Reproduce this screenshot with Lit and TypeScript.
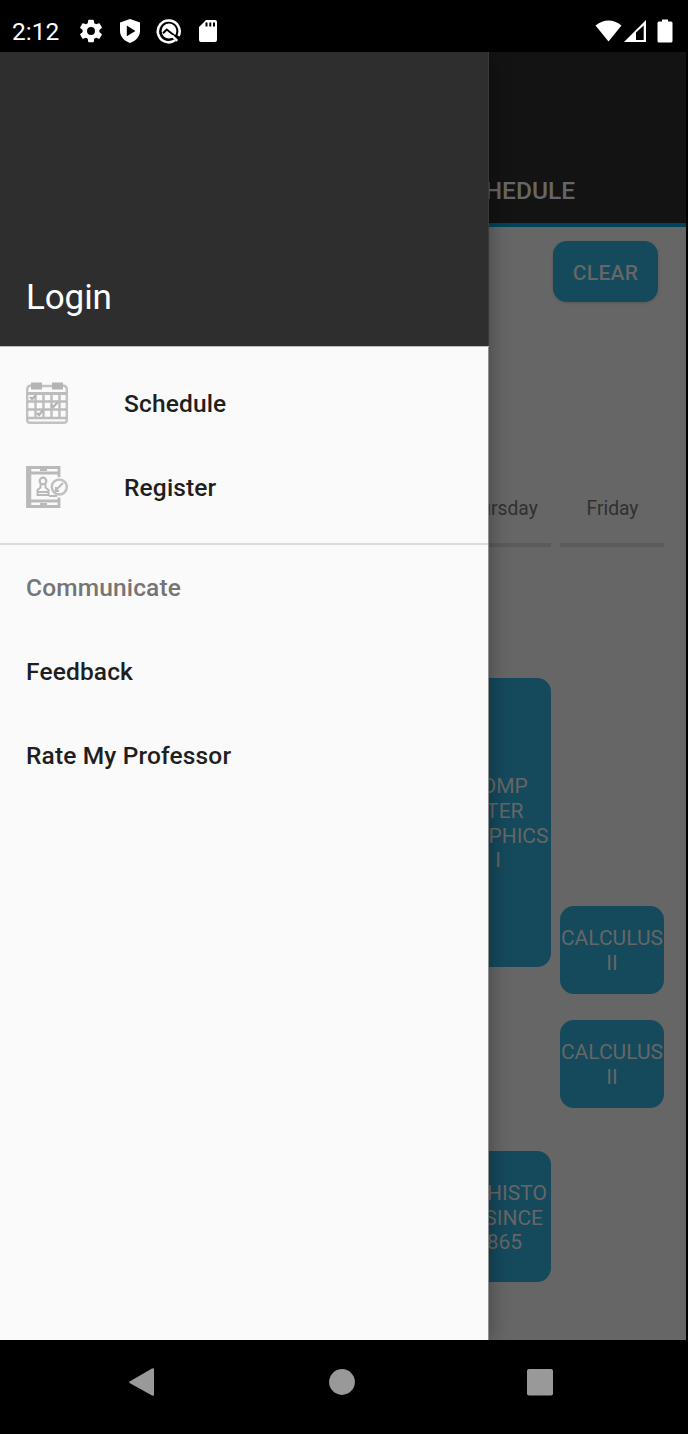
import { LitElement, html, css, svg } from "lit";
import { customElement } from "lit/decorators.js";

const gear = svg`<path d="M19.14 12.94c.04-.3.06-.61.06-.94 0-.32-.02-.64-.07-.94l2.03-1.58a.49.49 0 0 0 .12-.61l-1.92-3.32a.49.49 0 0 0-.59-.22l-2.39.96c-.5-.38-1.03-.7-1.62-.94L14.4 2.81a.48.48 0 0 0-.48-.41h-3.84a.47.47 0 0 0-.47.41l-.36 2.54c-.59.24-1.13.57-1.62.94l-2.39-.96a.48.48 0 0 0-.59.22L2.74 8.87a.47.47 0 0 0 .12.61l2.03 1.58c-.05.3-.09.63-.09.94s.02.64.07.94l-2.03 1.58a.49.49 0 0 0-.12.61l1.92 3.32c.12.22.37.29.59.22l2.39-.96c.5.38 1.03.7 1.62.94l.36 2.54c.05.24.24.41.48.41h3.84c.24 0 .44-.17.47-.41l.36-2.54c.59-.24 1.13-.56 1.62-.94l2.39.96c.22.08.47 0 .59-.22l1.92-3.32a.47.47 0 0 0-.12-.61zM12 15.400a3.400 3.400 0 1 1 0-6.800 3.400 3.400 0 0 1 0 6.800z"/>`;

@customElement("app-root")
export class AppRoot extends LitElement {
  static styles = css`
    :host { display: block; position: relative; width: 688px; height: 1434px; overflow: hidden; background: #000; font-family: Roboto, sans-serif; }
    * { box-sizing: border-box; }
    .phone { display: flex; flex-direction: column; height: 1434px; }
    .status { display: flex; align-items: center; height: 52px; padding: 10px 12px 0; color: #fff; fill: #fff; }
    .time { width: 65px; font-size: 24.5px; line-height: 30px; padding-top: 2px; }
    .icons { display: flex; gap: 11px; flex: 1; }
    .icons svg, .signals svg { display: block; }
    .signals { display: flex; }
    .main { flex: 1; width: 686px; background: #666; display: flex; flex-direction: column; }
    .appbar { height: 175px; background: #131313; border-bottom: 4px solid #00435b; display: flex; justify-content: flex-end; align-items: flex-end; padding: 0 111px 16px 0; color: #666; font-size: 24.5px; line-height: 32px; font-weight: 500; }
    .tools { height: 268px; display: flex; justify-content: flex-end; align-items: flex-start; padding: 14px 28px 0 0; }
    .clear { width: 105px; height: 61px; border-radius: 14px; background: #15495c; color: #666; font-size: 21px; font-weight: 500; letter-spacing: 0.25px; display: flex; align-items: center; justify-content: center; box-shadow: 0 1px 3px rgba(0,0,0,.15); padding: 2px 0 0 0; }
    .days { display: flex; justify-content: flex-end; gap: 9px; padding-right: 22px; }
    .day { width: 104px; display: flex; flex-direction: column; }
    .name { height: 52px; border-bottom: 4px solid #5b5b5b; text-align: center; color: #303030; font-size: 19.3px; line-height: 26px; padding: 1px 0 0 1px; }
    .thu .name { padding: 1px 2px 0 0; }
    .course { border-radius: 14px; background: #15495c; color: #666; font-size: 21px; line-height: 24.9px; text-align: center; display: flex; align-items: center; justify-content: center; white-space: pre; padding-top: 2px; }
    .comp { height: 289px; margin-top: 131px; padding-right: 2px; }
    .hist { height: 131px; margin-top: 184px; padding: 3px 1px 0 0; }
    .calc1 { height: 88px; margin-top: 359px; }
    .calc2 { height: 88px; margin-top: 26px; }
    .nav { height: 94px; fill: #999; }
    .nav svg { display: block; }
    .drawer { position: absolute; left: 0; top: 52px; width: 489px; height: 1288px; background: #fafafa; border-right: 1px solid #8f8f8f; box-shadow: 2px 0 18px rgba(0,0,0,.3); clip-path: inset(0 -40px 0 0); color: #1f1f1f; font-size: 24.5px; font-weight: 500; letter-spacing: 0.15px; }
    .head { height: 295px; margin-right: -1px; background: #2e2e2e; border-bottom: 1px solid #bbb; box-shadow: inset -1px 0 #3a3a3a; color: #fff; font-weight: 400; font-size: 35px; letter-spacing: -0.1px; line-height: 42px; padding: 225px 26px 0; }
    .menu { height: 198px; border-bottom: 2px solid #dcdcdc; padding-top: 14px; }
    .row { height: 84px; display: flex; align-items: center; padding: 1px 26px 0; gap: 56px; }
    .row svg { display: block; margin-bottom: 2px; }
    .sub { color: #757575; }
  `;

  render() {
    return html`
      <div class="phone">
        <div class="status">
          <div class="time">2:12</div>
          <div class="icons">
            <svg width="28" height="28" viewBox="0 0 24 24">${gear}</svg>
            <svg width="28" height="28" viewBox="0 0 28 28"><path fill-rule="evenodd" d="M14 2 24 5.500V14c0 5.500-4 9.700-10 12C8 23.700 4 19.500 4 14V5.500zM10.800 8.500v10.800l8.600-5.400z"/></svg>
            <svg width="28" height="28" viewBox="0 0 28 28"><path fill="none" stroke="#fff" stroke-width="2.600" d="M20 23.300A10.900 10.900 0 1 1 23.600 19"/><circle cx="14" cy="14" r="7.400"/><path d="m8 16.300 3.700-3.800L22.500 21" fill="none" stroke="#000" stroke-width="2"/><path d="m17 18.600 5.200 5.200" stroke="#fff" stroke-width="2.400"/></svg>
            <svg width="28" height="28" viewBox="0 0 28 28"><path fill-rule="evenodd" d="M12 3h9a2 2 0 0 1 2 2v18a2 2 0 0 1-2 2H7a2 2 0 0 1-2-2V10zM11.500 5.500v4h2v-4zm3.800 0v4h2v-4zm3.700 0v4h2v-4z"/></svg>
          </div>
          <div class="signals">
            <svg width="82" height="28" viewBox="0 0 82 28"><path d="M1.500 8.500Q14.500-1.500 27.500 8.500L14.500 24.500zM30 25 52 3v22zM42 15.500V23h7.700V8.500z" fill-rule="evenodd"/><path d="M66 5h3V3h6v2h3q1.500 0 1.500 1.500v18q0 1.500-1.500 1.500H66q-1.500 0-1.500-1.500v-18Q64.500 5 66 5z" transform="translate(-1 -.500)"/></svg>
          </div>
        </div>
        <div class="main">
          <div class="appbar">SCHEDULE</div>
          <div class="tools"><div class="clear">CLEAR</div></div>
          <div class="days">
            <div class="day thu">
              <div class="name">Thursday</div>
              <div class="course comp">COMP
UTER
GRAPHICS
I</div>
              <div class="course hist">U.S HISTO
RY SINCE
1865</div>
            </div>
            <div class="day">
              <div class="name">Friday</div>
              <div class="course calc1">CALCULUS
II</div>
              <div class="course calc2">CALCULUS
II</div>
            </div>
          </div>
        </div>
        <div class="nav">
          <svg width="688" height="94" viewBox="0 0 688 94"><path d="M130 41.200 152 28.500q2-1 2 1v25q0 2-2 1L130 43.200q-1.500-1 0-2z"/><circle cx="342" cy="42" r="12.900"/><rect x="527" y="29" width="26" height="26.500" rx="2"/></svg>
        </div>
      </div>
      <div class="drawer">
        <div class="head">Login</div>
        <div class="menu">
          <div class="row">
            <svg width="42" height="42" viewBox="0 0 42 42" fill="none" stroke="#bcbcbc" stroke-width="2.400">
              <path d="M5 3.500Q1.200 4 1.200 7v31q0 2.800 3 2.800h33.600q3 0 3-2.800V7q0-3-3.800-3.500M16 4h10" stroke="#c2c2c2"/>
              <path d="M5 .500h11v7H5zm21 0h11v7H26z" fill="#b4b4b4" stroke="none"/>
              <path d="M1 11.500h40" stroke-width="3"/>
              <path d="M1 19.500h40M1 27.500h40M1 36h40M9.500 12v24M17.500 12v24M25.500 12v24M33.500 12v24"/>
              <path d="m4 15 2 2 4-4M25 23l2 2 5-5M11 31l2 2 4-5" stroke="#b4b4b4"/>
            </svg>
            <span>Schedule</span>
          </div>
          <div class="row">
            <svg width="42" height="42" viewBox="0 0 42 42" fill="none" stroke="#b9b9b9" stroke-width="2.200">
              <path d="M33 11V1.500H1.500v39H33v-9" stroke-width="2.800"/>
              <path d="M3 2v38" stroke-width="4.500"/>
              <path d="M4 7h30M4 35h30" stroke-width="2.800"/><path d="M14 4h7M14 38h7" />
              <circle cx="17" cy="15" r="3.300"/>
              <path d="M14.500 18v3.500l-3 2.500v5h11v-5l-3-2.500V18M12 26h10M23 30h8" stroke-width="2"/>
              <circle cx="33.300" cy="21" r="7.500" stroke="#c1c1c1" stroke-width="2.500"/>
              <path d="m29 25 8-8M30 21v4h3" stroke-width="2"/>
            </svg>
            <span>Register</span>
          </div>
        </div>
        <div class="row sub">Communicate</div>
        <div class="row">Feedback</div>
        <div class="row">Rate My Professor</div>
      </div>
    `;
  }
}
